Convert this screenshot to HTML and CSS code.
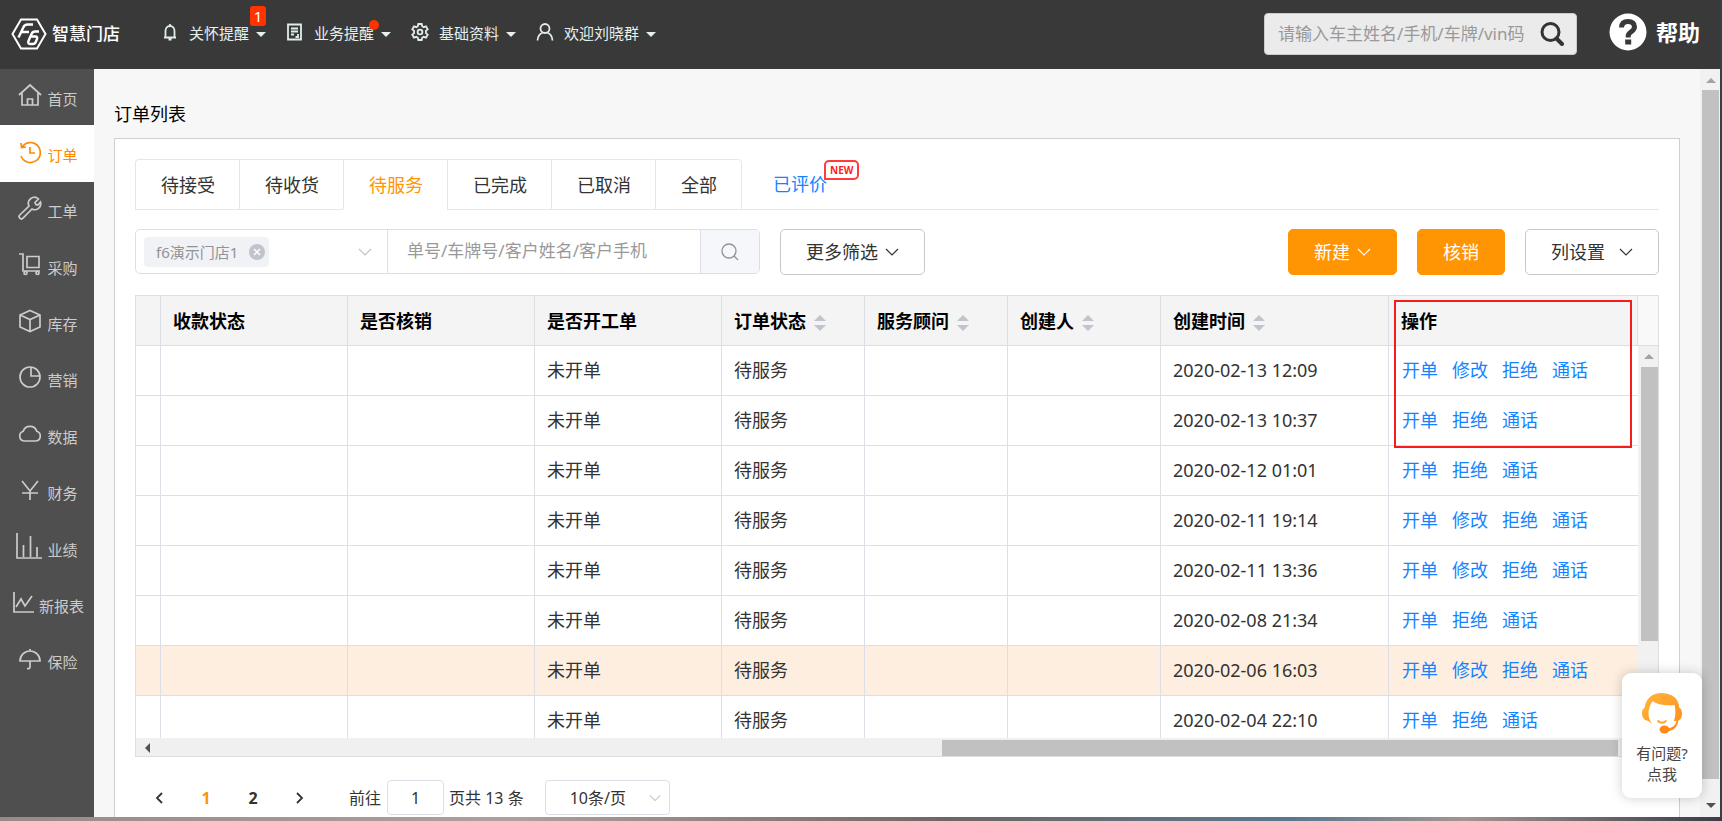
FILE: index.html
```html
<!DOCTYPE html>
<html lang="zh-CN">
<head>
<meta charset="utf-8">
<title>订单列表</title>
<link rel="stylesheet" href="styles.css">
</head>
<body>
<div class="window">
  <header class="topbar">
    <a class="logo" href="#">
      <svg class="logo-mark" viewBox="0 0 36 32" width="36" height="32" fill="none" stroke="#fff" stroke-width="2">
        <path d="M10 1.500h16l8.500 14.500-8.500 14.500H10L1.500 16z"/>
        <path d="M22 6.500h-5.500q-3 0-4.200 3L7.500 19.500M10.500 14h7.500M28 13.500h-4q-2.500 0-3.500 2.500l-3 7q-1 3 1.500 3h3q2 0 3-2.500l1-2.500q.8-2.500-1.500-2.500h-4.500" stroke-width="2.400"/>
      </svg>
      <span class="logo-text">智慧门店</span>
    </a>
    <nav class="topnav">
      <button class="topnav-item" type="button">
        <svg class="topnav-icon" viewBox="0 0 18 18" width="18" height="18"><path d="M3 14.500h12M4.500 14.500V8a4.500 5 0 0 1 9 0v6.500M9 3V1M7.500 16.500h3"/></svg>
        <span>关怀提醒</span><i class="caret"></i><span class="count">1</span>
      </button>
      <button class="topnav-item" type="button">
        <svg class="topnav-icon" viewBox="0 0 18 18" width="18" height="18"><path d="M2 1.500h13v15H2zM5 5.500h7M5 8.500h7M5 11.500h3M12 11v3H9.500"/></svg>
        <span>业务提醒</span><i class="caret"></i><span class="dot"></span>
      </button>
      <button class="topnav-item" type="button">
        <svg class="topnav-icon" viewBox="0 0 18 18" width="18" height="18"><path d="M7.300 1h3.400l.5 2.300 1.500.9 2.300-.8 1.700 2.900-1.800 1.600v2.200l1.800 1.600-1.700 2.900-2.300-.8-1.500.9-.5 2.300H7.300l-.5-2.300-1.500-.9-2.300.8-1.700-2.900 1.800-1.600V7.900L1.300 6.300 3 3.400l2.300.8 1.500-.9z"/><circle cx="9" cy="9" r="2.400"/></svg>
        <span>基础资料</span><i class="caret"></i>
      </button>
      <button class="topnav-item" type="button">
        <svg class="topnav-icon" viewBox="0 0 18 18" width="18" height="18"><circle cx="9" cy="5.500" r="4.500"/><path d="M1.500 17.500q.5-6.500 5.500-8M16.500 17.500q-.5-6.500-5.500-8"/></svg>
        <span>欢迎刘晓群</span><i class="caret"></i>
      </button>
    </nav>
    <form class="global-search">
      <input class="global-input" type="text" aria-label="搜索" placeholder="请输入车主姓名/手机/车牌/vin码">
      <button class="global-button" type="button" aria-label="搜索">
        <svg viewBox="0 0 24 24" width="24" height="24" fill="none" stroke="#333"><circle cx="10.500" cy="10" r="8.500" stroke-width="3"/><path d="M16.500 16.500l5.500 5.500" stroke-width="4" stroke-linecap="round"/></svg>
      </button>
    </form>
    <a class="help" href="#">
      <svg viewBox="0 0 38 38" width="38" height="38"><circle cx="19" cy="19" r="18.500" fill="#fff"/><path d="M12.500 14.500q.3-6 6.500-6t6.500 5.300q0 2.700-3.300 5-3 2-3 4.200v1.500" fill="none" stroke="#393939" stroke-width="5"/><path d="M16.200 26.500h6v5h-6z" fill="#393939"/></svg>
      <span>帮助</span>
    </a>
  </header>

  <div class="body">
    <nav class="sidebar">
      <a class="side-item" href="#"><svg class="side-icon" viewBox="0 0 24 24" width="24" height="24"><path d="M1 12L12 2l11 10M4 10v12h16V10M9.500 22v-6h5v6"/></svg><span>首页</span></a>
      <a class="side-item side-active" href="#"><svg class="side-icon" viewBox="0 0 24 24" width="24" height="24"><path d="M4 7a10 10 0 1 1-1 9M12 7v6h5M3 3l.5 4.500L8 7"/></svg><span>订单</span></a>
      <a class="side-item" href="#"><svg class="side-icon" viewBox="0 0 24 24" width="24" height="24"><path d="M20.500 3L17 6.500l.8 2 2 .5L22.500 6a6 6 0 0 1-8.500 7L5 22.200a2 2 0 0 1-3.200-3.200L11 10a6 6 0 0 1 9.500-7z"/></svg><span>工单</span></a>
      <a class="side-item" href="#"><svg class="side-icon" viewBox="0 0 24 24" width="24" height="24"><path d="M1 2h4v17h17M9 4.500h12v11H9z"/><circle cx="7.500" cy="21" r="1.500"/><circle cx="19.500" cy="21" r="1.500"/></svg><span>采购</span></a>
      <a class="side-item" href="#"><svg class="side-icon" viewBox="0 0 24 24" width="24" height="24"><path d="M12 1.500L22 6v12l-10 4.500L2 18V6zM2 6l10 4.500L22 6M12 10.500v12"/></svg><span>库存</span></a>
      <a class="side-item" href="#"><svg class="side-icon" viewBox="0 0 24 24" width="24" height="24"><circle cx="12" cy="12" r="10"/><path d="M13 2v9h9"/></svg><span>营销</span></a>
      <a class="side-item" href="#"><svg class="side-icon" viewBox="0 0 24 24" width="24" height="24"><path d="M6 20a5 5 0 0 1-.8-9.700 7.200 7.200 0 0 1 13.600 0A5 5 0 0 1 18 20z"/></svg><span>数据</span></a>
      <a class="side-item" href="#"><svg class="side-icon" viewBox="0 0 24 24" width="24" height="24"><path d="M4 3l8 10 8-10M12 13v9M4 15h16"/></svg><span>财务</span></a>
      <a class="side-item" href="#"><svg class="side-icon side-icon-large" viewBox="0 0 28 28" width="28" height="28"><path d="M3 1v25h25M9.500 25V13M16.500 25V4M23 25V15"/></svg><span>业绩</span></a>
      <a class="side-item" href="#"><svg class="side-icon" viewBox="0 0 22 22" width="22" height="22"><path d="M2 1v20h20M4 16l5-8 4 7 7-10"/></svg><span>新报表</span></a>
      <a class="side-item" href="#"><svg class="side-icon" viewBox="0 0 24 24" width="24" height="24"><path d="M2 14a10 10 0 0 1 20 0zM12 2v2M12 14v6q0 2-3 1.500"/></svg><span>保险</span></a>
    </nav>

    <main class="content">
      <h1 class="page-title">订单列表</h1>
      <section class="card">
        <div class="tabs">
          <button class="tab tab-first" type="button">待接受</button>
          <button class="tab" type="button">待收货</button>
          <button class="tab tab-active" type="button">待服务</button>
          <button class="tab" type="button">已完成</button>
          <button class="tab" type="button">已取消</button>
          <button class="tab tab-last" type="button">全部</button>
          <a class="rated" href="#">已评价<span class="new-badge">NEW</span></a>
        </div>

        <div class="filters">
          <div class="combo">
            <div class="store">
              <span class="tag">f6演示门店1<button class="tag-close" type="button" aria-label="移除"><svg viewBox="0 0 16 16" width="16" height="16"><circle cx="8" cy="8" r="8" fill="#c0c4cc"/><path d="M5 5l6 6M11 5l-6 6" stroke="#fff" stroke-width="1.500"/></svg></button></span>
              <svg class="chevron chevron-pale" viewBox="0 0 14 14" width="14" height="14"><path d="M1 4l6 6 6-6"/></svg>
            </div>
            <input class="keyword" type="text" aria-label="关键字" placeholder="单号/车牌号/客户姓名/客户手机">
            <button class="keyword-button" type="button" aria-label="查询"><svg viewBox="0 0 18 18" width="18" height="18" fill="none" stroke="#909399" stroke-width="1.300"><circle cx="8" cy="8" r="7"/><path d="M13 13l4 4"/></svg></button>
          </div>
          <button class="button" type="button">更多筛选<svg class="chevron" viewBox="0 0 14 14" width="14" height="14"><path d="M1 4l6 6 6-6"/></svg></button>
          <div class="actions">
            <button class="button button-primary" type="button">新建<svg class="chevron" viewBox="0 0 14 14" width="14" height="14"><path d="M1 4l6 6 6-6"/></svg></button>
            <button class="button button-primary" type="button">核销</button>
            <button class="button button-columns" type="button">列设置<svg class="chevron" viewBox="0 0 14 14" width="14" height="14"><path d="M1 4l6 6 6-6"/></svg></button>
          </div>
        </div>

        <div class="grid">
          <div class="grid-view">
            <table class="orders">
              <colgroup><col class="w-stub"><col class="w-wide"><col class="w-wide"><col class="w-wide"><col class="w-mid"><col class="w-mid"><col class="w-creator"><col class="w-time"><col></colgroup>
              <thead>
                <tr><th></th><th>收款状态</th><th>是否核销</th><th>是否开工单</th><th>订单状态<i class="sort"></i></th><th>服务顾问<i class="sort"></i></th><th>创建人<i class="sort"></i></th><th>创建时间<i class="sort"></i></th><th>操作</th></tr>
              </thead>
              <tbody>
                <tr><td></td><td></td><td></td><td>未开单</td><td>待服务</td><td></td><td></td><td>2020-02-13 12:09</td><td><div class="ops"><a href="#">开单</a><a href="#">修改</a><a href="#">拒绝</a><a href="#">通话</a></div></td></tr>
                <tr><td></td><td></td><td></td><td>未开单</td><td>待服务</td><td></td><td></td><td>2020-02-13 10:37</td><td><div class="ops"><a href="#">开单</a><a href="#">拒绝</a><a href="#">通话</a></div></td></tr>
                <tr><td></td><td></td><td></td><td>未开单</td><td>待服务</td><td></td><td></td><td>2020-02-12 01:01</td><td><div class="ops"><a href="#">开单</a><a href="#">拒绝</a><a href="#">通话</a></div></td></tr>
                <tr><td></td><td></td><td></td><td>未开单</td><td>待服务</td><td></td><td></td><td>2020-02-11 19:14</td><td><div class="ops"><a href="#">开单</a><a href="#">修改</a><a href="#">拒绝</a><a href="#">通话</a></div></td></tr>
                <tr><td></td><td></td><td></td><td>未开单</td><td>待服务</td><td></td><td></td><td>2020-02-11 13:36</td><td><div class="ops"><a href="#">开单</a><a href="#">修改</a><a href="#">拒绝</a><a href="#">通话</a></div></td></tr>
                <tr><td></td><td></td><td></td><td>未开单</td><td>待服务</td><td></td><td></td><td>2020-02-08 21:34</td><td><div class="ops"><a href="#">开单</a><a href="#">拒绝</a><a href="#">通话</a></div></td></tr>
                <tr class="row-hover"><td></td><td></td><td></td><td>未开单</td><td>待服务</td><td></td><td></td><td>2020-02-06 16:03</td><td><div class="ops"><a href="#">开单</a><a href="#">修改</a><a href="#">拒绝</a><a href="#">通话</a></div></td></tr>
                <tr><td></td><td></td><td></td><td>未开单</td><td>待服务</td><td></td><td></td><td>2020-02-04 22:10</td><td><div class="ops"><a href="#">开单</a><a href="#">拒绝</a><a href="#">通话</a></div></td></tr>
              </tbody>
            </table>
          </div>
          <div class="grid-side" aria-hidden="true">
            <div class="grid-gutter"></div>
            <div class="vtrack"><i class="arrow-up"></i><div class="vthumb"></div></div>
          </div>
          <div class="htrack" aria-hidden="true"><i class="arrow-left"></i><div class="hthumb"></div></div>
          <div class="callout"></div>
        </div>

        <div class="pager">
          <button class="page-step" type="button" aria-label="上一页"><svg viewBox="0 0 12 14" width="12" height="14"><path d="M9 2L4 7l5 5"/></svg></button>
          <button class="page-number page-current" type="button">1</button>
          <button class="page-number" type="button">2</button>
          <button class="page-step" type="button" aria-label="下一页"><svg viewBox="0 0 12 14" width="12" height="14"><path d="M3 2l5 5-5 5"/></svg></button>
          <label class="jump" for="jump">前往</label>
          <input class="jump-input" id="jump" type="text" value="1">
          <span class="total">页共 13 条</span>
          <div class="size">
            <select class="size-select" aria-label="每页条数"><option>10条/页</option></select>
            <svg class="chevron chevron-pale size-chevron" viewBox="0 0 14 14" width="12" height="12"><path d="M1 4l6 6 6-6"/></svg>
          </div>
        </div>
      </section>
    </main>

    <div class="page-scroll" aria-hidden="true">
      <i class="arrow-up"></i><div class="page-thumb"></div><i class="arrow-down"></i>
    </div>
  </div>

  <button class="support" type="button">
    <svg viewBox="0 0 42 42" width="42" height="42">
      <defs><linearGradient id="hair" x1="0" y1="0" x2="1" y2="1"><stop offset="0" stop-color="#ffb83a"/><stop offset="1" stop-color="#ff8a1a"/></linearGradient></defs>
      <path fill="url(#hair)" d="M21 1C11 1 4.500 7 3.800 15.500Q1 17 1 21.500q0 6.500 6.500 7.500 1.500 1.500 3.500 3-4-6-3.500-12.500Q8 14 11.500 9 19 14.500 33.500 13q2 8.500-.5 16h2.500Q34 35 28 36.300h-2V39h2.500q7.500-1.500 9-10.500Q41 27 41 21.500q0-4.500-2.800-6Q37.500 7 31 3.500 26.500 1 21 1z"/>
      <ellipse cx="23.500" cy="37.500" rx="5" ry="4" fill="#ff8a1a"/>
      <path d="M16.500 28.500q4.500 4.500 9 0" fill="none" stroke="#ffa52e" stroke-width="1.800"/>
    </svg>
    <span>有问题?</span><span>点我</span>
  </button>
</div>
</body>
</html>
```

FILE: styles.css
```css
* {
  box-sizing: border-box;
}

body {
  margin: 0;
  height: 100vh;
  overflow: hidden;
  padding: 0 2px 4px 0;
  background: linear-gradient(90deg, #9a8a86, #b0a09b 30%, #6f6663 55%, #57788c 75%, #a3958f 85%, #3a3c48);
  color: #333;
  font-family: "Noto Sans", "Noto Sans CJK SC", sans-serif;
  font-size: 18px;
  line-height: 24px;
}

button,
input,
select {
  margin: 0;
  padding: 0;
  border: 0;
  background: none;
  color: inherit;
  font: inherit;
}

a {
  color: inherit;
  text-decoration: none;
}

.window {
  position: relative;
  display: flex;
  flex-direction: column;
  height: 100%;
  overflow: hidden;
  background: #f7f7f7;
}

/* Top bar */

.topbar {
  display: flex;
  align-items: center;
  flex: none;
  height: 69px;
  padding: 0 20px 6px 11px;
  background: #393939;
  color: #e6f0ee;
}

.logo {
  display: flex;
  align-items: center;
  gap: 5px;
  width: 150px;
  padding-top: 4px;
  color: #fff;
}

.logo-text {
  font-size: 17px;
  font-weight: 500;
}

.topnav {
  display: flex;
  gap: 20px;
  font-size: 15px;
}

.topnav-item {
  position: relative;
  display: flex;
  align-items: center;
}

.topnav-item span {
  padding-top: 2px;
}

.topnav-icon {
  margin-right: 10px;
  fill: none;
  stroke: #dfeeea;
  stroke-width: 1.8;
}

.caret {
  margin: 5px 0 0 7px;
  border: 5px solid transparent;
  border-top-color: #e6f0ee;
  border-bottom: 0;
}

.topnav-item .count {
  position: absolute;
  top: -13px;
  right: 0;
  width: 16px;
  padding: 0;
  border-radius: 3px;
  background: #ff3300;
  color: #fff;
  line-height: 20px;
}

.topnav-item .dot {
  position: absolute;
  top: 1px;
  right: 12px;
  width: 10px;
  height: 10px;
  padding: 0;
  border-radius: 5px;
  background: #ff3300;
}

.global-search {
  display: flex;
  align-items: center;
  width: 313px;
  height: 42px;
  margin: 4px 32px 0 auto;
  padding: 0 12px 0 13px;
  border: 1px solid #ccc;
  border-radius: 4px;
  background: #ebebeb;
}

.global-input {
  flex: 1;
  min-width: 0;
  color: #333;
  font-size: 17px;
  outline: 0;
}

.global-input::placeholder,
.keyword::placeholder {
  color: #999;
  opacity: 1;
}

.global-button {
  display: flex;
}

.help {
  display: flex;
  align-items: center;
  gap: 9px;
  color: #fff;
  font-size: 22px;
  font-weight: 700;
}

/* Side menu */

.body {
  display: flex;
  flex: 1;
  min-height: 0;
}

.sidebar {
  display: flex;
  flex: none;
  flex-direction: column;
  width: 94px;
  padding-bottom: 128px;
  background: #4f4f4f;
  color: #ccc;
  font-size: 15px;
}

.side-item {
  display: flex;
  flex: 1;
  align-items: center;
  justify-content: center;
  gap: 5px;
  padding-left: 2px;
}

.side-item span {
  padding-top: 3px;
}

.side-icon {
  margin-bottom: 4px;
  fill: none;
  stroke: currentColor;
  stroke-width: 1.7;
}

.side-icon-large {
  margin-left: -4px;
}

.side-active {
  background: #fff;
  color: #ff8a00;
}

/* Main area */

.content {
  display: flex;
  flex: 1;
  flex-direction: column;
  min-width: 0;
  padding: 32px 20px 0;
  overflow: hidden;
}

.page-title {
  margin: 0 0 11px;
  color: #000;
  font-size: 18px;
  font-weight: 400;
  line-height: 26px;
}

.card {
  flex: 1 0 auto;
  padding: 20px;
  border: 1px solid #d0d0d0;
  border-bottom: 0;
  background: #fff;
}

.tabs {
  display: flex;
  height: 51px;
  border-bottom: 1px solid #e4e7ed;
}

.tab {
  height: 51px;
  padding: 0 24px 0 25px;
  border: 1px solid #e4e7ed;
  border-right: 0;
}

.tab-first {
  border-top-left-radius: 4px;
}

.tab-last {
  border-right: 1px solid #e4e7ed;
  border-top-right-radius: 4px;
}

.tab-active {
  border-bottom-color: #fff;
  color: #ff9502;
}

.rated {
  position: relative;
  margin-left: 31px;
  color: #1583ff;
  line-height: 50px;
}

.new-badge {
  position: absolute;
  top: 1px;
  left: 51px;
  padding: 0 4px;
  border: 2px solid #ff3b3b;
  border-radius: 5px 5px 5px 0;
  background: #fff;
  color: #ff1e1e;
  font-size: 10px;
  font-weight: 700;
  line-height: 16px;
}

/* Filters */

.filters {
  display: flex;
  align-items: flex-start;
  gap: 20px;
  margin: 19px 0 20px;
}

.combo {
  display: flex;
  width: 625px;
  height: 45px;
  border: 1px solid #dcdfe6;
  border-radius: 5px;
  overflow: hidden;
}

.store {
  display: flex;
  align-items: center;
  justify-content: space-between;
  width: 252px;
  padding: 0 15px 0 8px;
  border-right: 1px solid #dcdfe6;
}

.tag {
  display: flex;
  align-items: center;
  gap: 11px;
  height: 30px;
  padding: 0 4px 0 12px;
  border-radius: 4px;
  background: #f0f2f5;
  color: #909399;
  font-size: 15px;
}

.tag-close {
  display: flex;
}

.chevron {
  fill: none;
  stroke: currentColor;
  stroke-width: 1.2;
}

.chevron-pale {
  color: #c0c4cc;
}

.keyword {
  flex: 1;
  min-width: 0;
  padding: 0 19px 2px;
  font-size: 17px;
  outline: 0;
}

.keyword-button {
  display: flex;
  align-items: center;
  justify-content: center;
  width: 59px;
  border-left: 1px solid #dcdfe6;
  background: #f5f7fa;
}

.button {
  display: flex;
  align-items: center;
  gap: 7px;
  height: 46px;
  padding: 0 25px;
  border: 1px solid #c8c8c8;
  border-radius: 5px;
}

.button-primary {
  border-color: #ff9502;
  background: #ff9502;
  color: #fff;
}

.actions {
  display: flex;
  gap: 20px;
  margin-left: auto;
}

.button-columns {
  gap: 14px;
}

/* Order table */

.grid {
  position: relative;
  display: grid;
  grid-template-columns: 1fr 20px;
  border: 1px solid #dcdfe6;
}

.grid-view {
  max-height: 442px;
  overflow: hidden;
}

.orders {
  width: 100%;
  border-collapse: separate;
  border-spacing: 0;
  table-layout: fixed;
}

.w-stub {
  width: 25px;
}

.w-wide {
  width: 187px;
}

.w-mid {
  width: 143px;
}

.w-creator {
  width: 153px;
}

.w-time {
  width: 228px;
}

.orders th,
.orders td {
  height: 50px;
  padding: 0 0 0 12px;
  border-right: 1px solid #dcdfe6;
  border-bottom: 1px solid #dcdfe6;
  text-align: left;
  white-space: nowrap;
}

.orders th {
  background: #f4f4f4;
  color: #000;
  font-weight: 700;
}

.orders td {
  padding-bottom: 2px;
}

.orders td:last-child {
  padding-left: 13px;
  border-right: 0;
}

.row-hover {
  background: #fdeedf;
}

.sort {
  display: inline-grid;
  gap: 4px;
  margin-left: 8px;
  vertical-align: middle;
}

.sort::before,
.sort::after {
  border: 6px solid transparent;
  content: "";
}

.sort::before {
  border-top: 0;
  border-bottom-color: #c0c4cc;
}

.sort::after {
  border-bottom: 0;
  border-top-color: #c0c4cc;
}

.ops {
  display: flex;
  gap: 14px;
  color: #1583ff;
}

.grid-side {
  display: flex;
  flex-direction: column;
}

.grid-gutter {
  height: 50px;
  border-bottom: 1px solid #dcdfe6;
  background: #f9f9f9;
}

.vtrack {
  flex: 1;
  padding: 8px 0 0 3px;
  background: #f1f1f1;
}

.vtrack .arrow-up {
  margin-left: 3px;
}

.vthumb {
  height: 274px;
  margin-top: 8px;
  background: #c1c1c1;
}

.htrack {
  display: flex;
  grid-column: 1 / -1;
  align-items: center;
  height: 18px;
  padding: 2px 40px 0 9px;
  background: #f0f0f0;
}

.hthumb {
  width: 676px;
  height: 16px;
  margin-left: auto;
  background: #c1c1c1;
}

.arrow-up,
.arrow-down,
.arrow-left {
  display: block;
  width: 0;
  border: 5px solid transparent;
}

.arrow-up {
  border-top: 0;
  border-bottom-color: #a3a3a3;
}

.arrow-down {
  border-bottom: 0;
  border-top-color: #505050;
}

.arrow-left {
  border-left: 0;
  border-right-color: #505050;
}

/* Red frame over the operation column */
.callout {
  position: absolute;
  top: 4px;
  right: 26px;
  width: 238px;
  height: 148px;
  border: 2px solid #f41c1c;
}

/* Pagination */

.pager {
  display: flex;
  align-items: center;
  margin-top: 23px;
  padding-left: 8px;
  font-size: 16px;
}

.page-step,
.page-number {
  display: flex;
  align-items: center;
  justify-content: center;
  width: 32px;
  margin-right: 15px;
  font-weight: 700;
}

.page-step svg {
  fill: none;
  stroke: #333;
  stroke-width: 1.8;
}

.page-current {
  color: #ff9502;
}

.jump {
  margin: 0 6px 0 18px;
}

.jump-input {
  width: 57px;
  height: 35px;
  border: 1px solid #dcdfe6;
  border-radius: 4px;
  text-align: center;
}

.total {
  margin: 0 21px 0 5px;
}

.size {
  position: relative;
}

.size-select {
  width: 125px;
  height: 35px;
  padding: 0 24px;
  border: 1px solid #dcdfe6;
  border-radius: 4px;
  appearance: none;
}

.size-chevron {
  position: absolute;
  top: 12px;
  right: 9px;
}

/* Page scrollbar */

.page-scroll {
  display: flex;
  flex: none;
  flex-direction: column;
  align-items: center;
  gap: 7px;
  width: 20px;
  padding: 9px 1px 9px 2px;
  background: #f1f1f1;
}

.page-thumb {
  width: 100%;
  flex: 1;
  margin-bottom: 17px;
  background: #c1c1c1;
}

/* Floating support button */

.support {
  position: absolute;
  right: 18px;
  bottom: 19px;
  display: flex;
  flex-direction: column;
  align-items: center;
  width: 80px;
  height: 125px;
  padding-top: 19px;
  border-radius: 9px;
  background: #fff;
  box-shadow: 0 0 12px rgba(0, 0, 0, 0.2);
  color: #444;
  font-size: 15px;
  line-height: 21px;
}

.support svg {
  margin-bottom: 9px;
}
```
